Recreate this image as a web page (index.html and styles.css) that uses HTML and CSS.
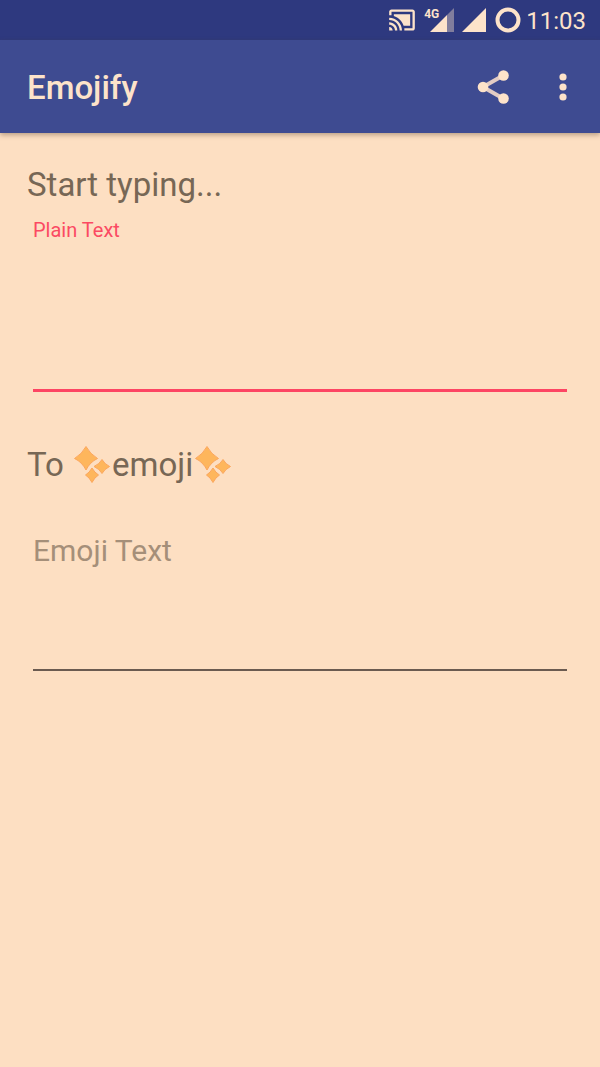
FILE: index.html
```html
<!DOCTYPE html>
<html lang="en">
<head>
<meta charset="utf-8">
<meta name="viewport" content="width=device-width, initial-scale=1">
<title>Emojify</title>
<link rel="stylesheet" href="styles.css">
</head>
<body>
<svg class="defs" aria-hidden="true">
  <symbol id="sparkles" viewBox="0 0 36 37">
    <path d="M12 .5Q16 8 23.500 12.500Q16 16 12 24Q8 16 .5 12.500Q8 8 12 .5Z"/>
    <path d="M28 13.500Q30.500 18 35.500 20.500Q30.500 23 28 27.500Q25.500 23 20 20.500Q25.500 18 28 13.500Z"/>
    <path d="M18 22Q20.500 26.500 24.500 29Q20.500 31.500 18 36.500Q15.500 31.500 11.500 29Q15.500 26.500 18 22Z"/>
  </symbol>
</svg>
<div class="status-bar">
  <svg class="cast" viewBox="0 0 24 24" role="img" aria-label="Casting"><path d="M1 18v3h3c0-1.660-1.340-3-3-3zm0-4v2c2.760 0 5 2.240 5 5h2c0-3.870-3.130-7-7-7zm18-7H5v1.630c3.960 1.280 7.090 4.410 8.370 8.370H19V7zM1 10v2c4.970 0 9 4.030 9 9h2c0-6.080-4.930-11-11-11zm20-7H3c-1.100 0-2 .9-2 2v3h2V5h18v14h-7v2h7c1.100 0 2-.9 2-2V5c0-1.100-.9-2-2-2z"/></svg>
  <span class="signal">
    <span class="network">4G</span>
    <svg class="bars" viewBox="0 0 24 24" aria-hidden="true"><path d="M17 7 24 0V24H17Z" opacity=".4"/><path d="M0 24 17 7V24Z"/></svg>
  </span>
  <svg class="bars" viewBox="0 0 24 24" aria-hidden="true"><path d="M0 24 24 0V24Z"/></svg>
  <svg class="ring" viewBox="0 0 26 26" aria-hidden="true"><circle cx="13" cy="13" r="10.500"/></svg>
  <time class="clock">11:03</time>
</div>
<header class="app-bar">
  <h1 class="title">Emojify</h1>
  <button class="action" type="button" aria-label="Share">
    <svg class="share" viewBox="0 0 34 36"><path d="M28 6 7 18 28 30"/><circle cx="27.500" cy="6.500" r="5.300"/><circle cx="7" cy="18" r="5.300"/><circle cx="27.500" cy="29.500" r="5.300"/></svg>
  </button>
  <button class="action" type="button" aria-label="More options">
    <svg class="more" viewBox="0 0 8 28"><circle cx="4" cy="4" r="3.600"/><circle cx="4" cy="14" r="3.600"/><circle cx="4" cy="24" r="3.600"/></svg>
  </button>
</header>
<main class="content">
  <h2 class="heading">Start typing...</h2>
  <div class="field">
    <label class="label" for="plain">Plain Text</label>
    <textarea class="input input-active" id="plain"></textarea>
  </div>
  <h2 class="heading">To <svg class="sparkle" role="img" aria-label="sparkles"><use href="#sparkles"/></svg>emoji<svg class="sparkle" role="img" aria-label="sparkles"><use href="#sparkles"/></svg></h2>
  <div class="field field-result">
    <textarea class="input" id="emoji" aria-label="Emoji Text" placeholder="Emoji Text" readonly></textarea>
  </div>
</main>
</body>
</html>
```
FILE: styles.css
```css
* {
  box-sizing: border-box;
}

body {
  margin: 0;
  min-height: 100vh;
  background: #fddfc2;
  color: #776755;
  font-family: Roboto, sans-serif;
}

.defs {
  position: absolute;
  width: 0;
  height: 0;
}

.status-bar {
  display: flex;
  align-items: center;
  justify-content: flex-end;
  height: 40px;
  padding: 0 14px;
  background: #2e397f;
  color: #fde3ca;
  fill: #fde3ca;
}

.cast {
  width: 28px;
  height: 28px;
  margin-right: 14px;
}

.signal {
  position: relative;
  display: flex;
  margin-right: 8px;
}

.network {
  position: absolute;
  top: 0;
  left: -6px;
  font-size: 12px;
  font-weight: 700;
  line-height: 12px;
}

.bars {
  width: 24px;
  height: 24px;
}

.ring {
  width: 26px;
  height: 26px;
  margin: 0 5px 0 9px;
  fill: none;
  stroke: #fde3ca;
  stroke-width: 4;
}

.clock {
  font-size: 24px;
  line-height: 40px;
  padding-top: 2px;
}

.app-bar {
  display: flex;
  align-items: center;
  height: 93px;
  padding: 0 12px 0 27px;
  background: #3e4b91;
  color: #fde3ca;
  box-shadow: 0 2px 5px rgba(80, 60, 40, 0.4);
}

.title {
  flex: 1;
  margin: 0;
  padding-top: 2px;
  font-size: 33px;
  font-weight: 500;
  line-height: 40px;
}

.action {
  display: flex;
  align-items: center;
  justify-content: center;
  width: 50px;
  height: 80px;
  padding: 0;
  border: 0;
  background: none;
  fill: #fde3ca;
}

.action + .action {
  margin-left: 20px;
}

.share {
  width: 34px;
  height: 36px;
}

.share path {
  fill: none;
  stroke: #e3ccc4;
  stroke-width: 4;
}

.more {
  width: 8px;
  height: 28px;
}

.content {
  padding: 32px 27px;
}

.heading {
  margin: 0;
  font-size: 33px;
  font-weight: 400;
  line-height: 40px;
}

.sparkle {
  width: 36px;
  height: 37px;
  margin: 0 2px;
  vertical-align: -7px;
  fill: #feb65c;
  stroke: #fba65e;
  stroke-width: 1;
}

.field {
  display: flex;
  flex-direction: column;
  margin: 13px 6px 53px;
}

.label {
  color: #fb4a62;
  font-size: 20px;
  line-height: 24px;
}

.input {
  display: block;
  width: 100%;
  height: 150px;
  padding: 0;
  border: 0;
  border-bottom: 2px solid #6b5b50;
  border-radius: 0;
  outline: 0;
  background: none;
  color: #4a4038;
  font: 30px/36px Roboto, sans-serif;
  resize: none;
}

.input-active {
  border-bottom: 3px solid #fd4563;
}

.field-result {
  margin-top: 48px;
}

.field-result .input {
  height: 138px;
}

.input::placeholder {
  color: #a58f79;
  opacity: 1;
}
```
